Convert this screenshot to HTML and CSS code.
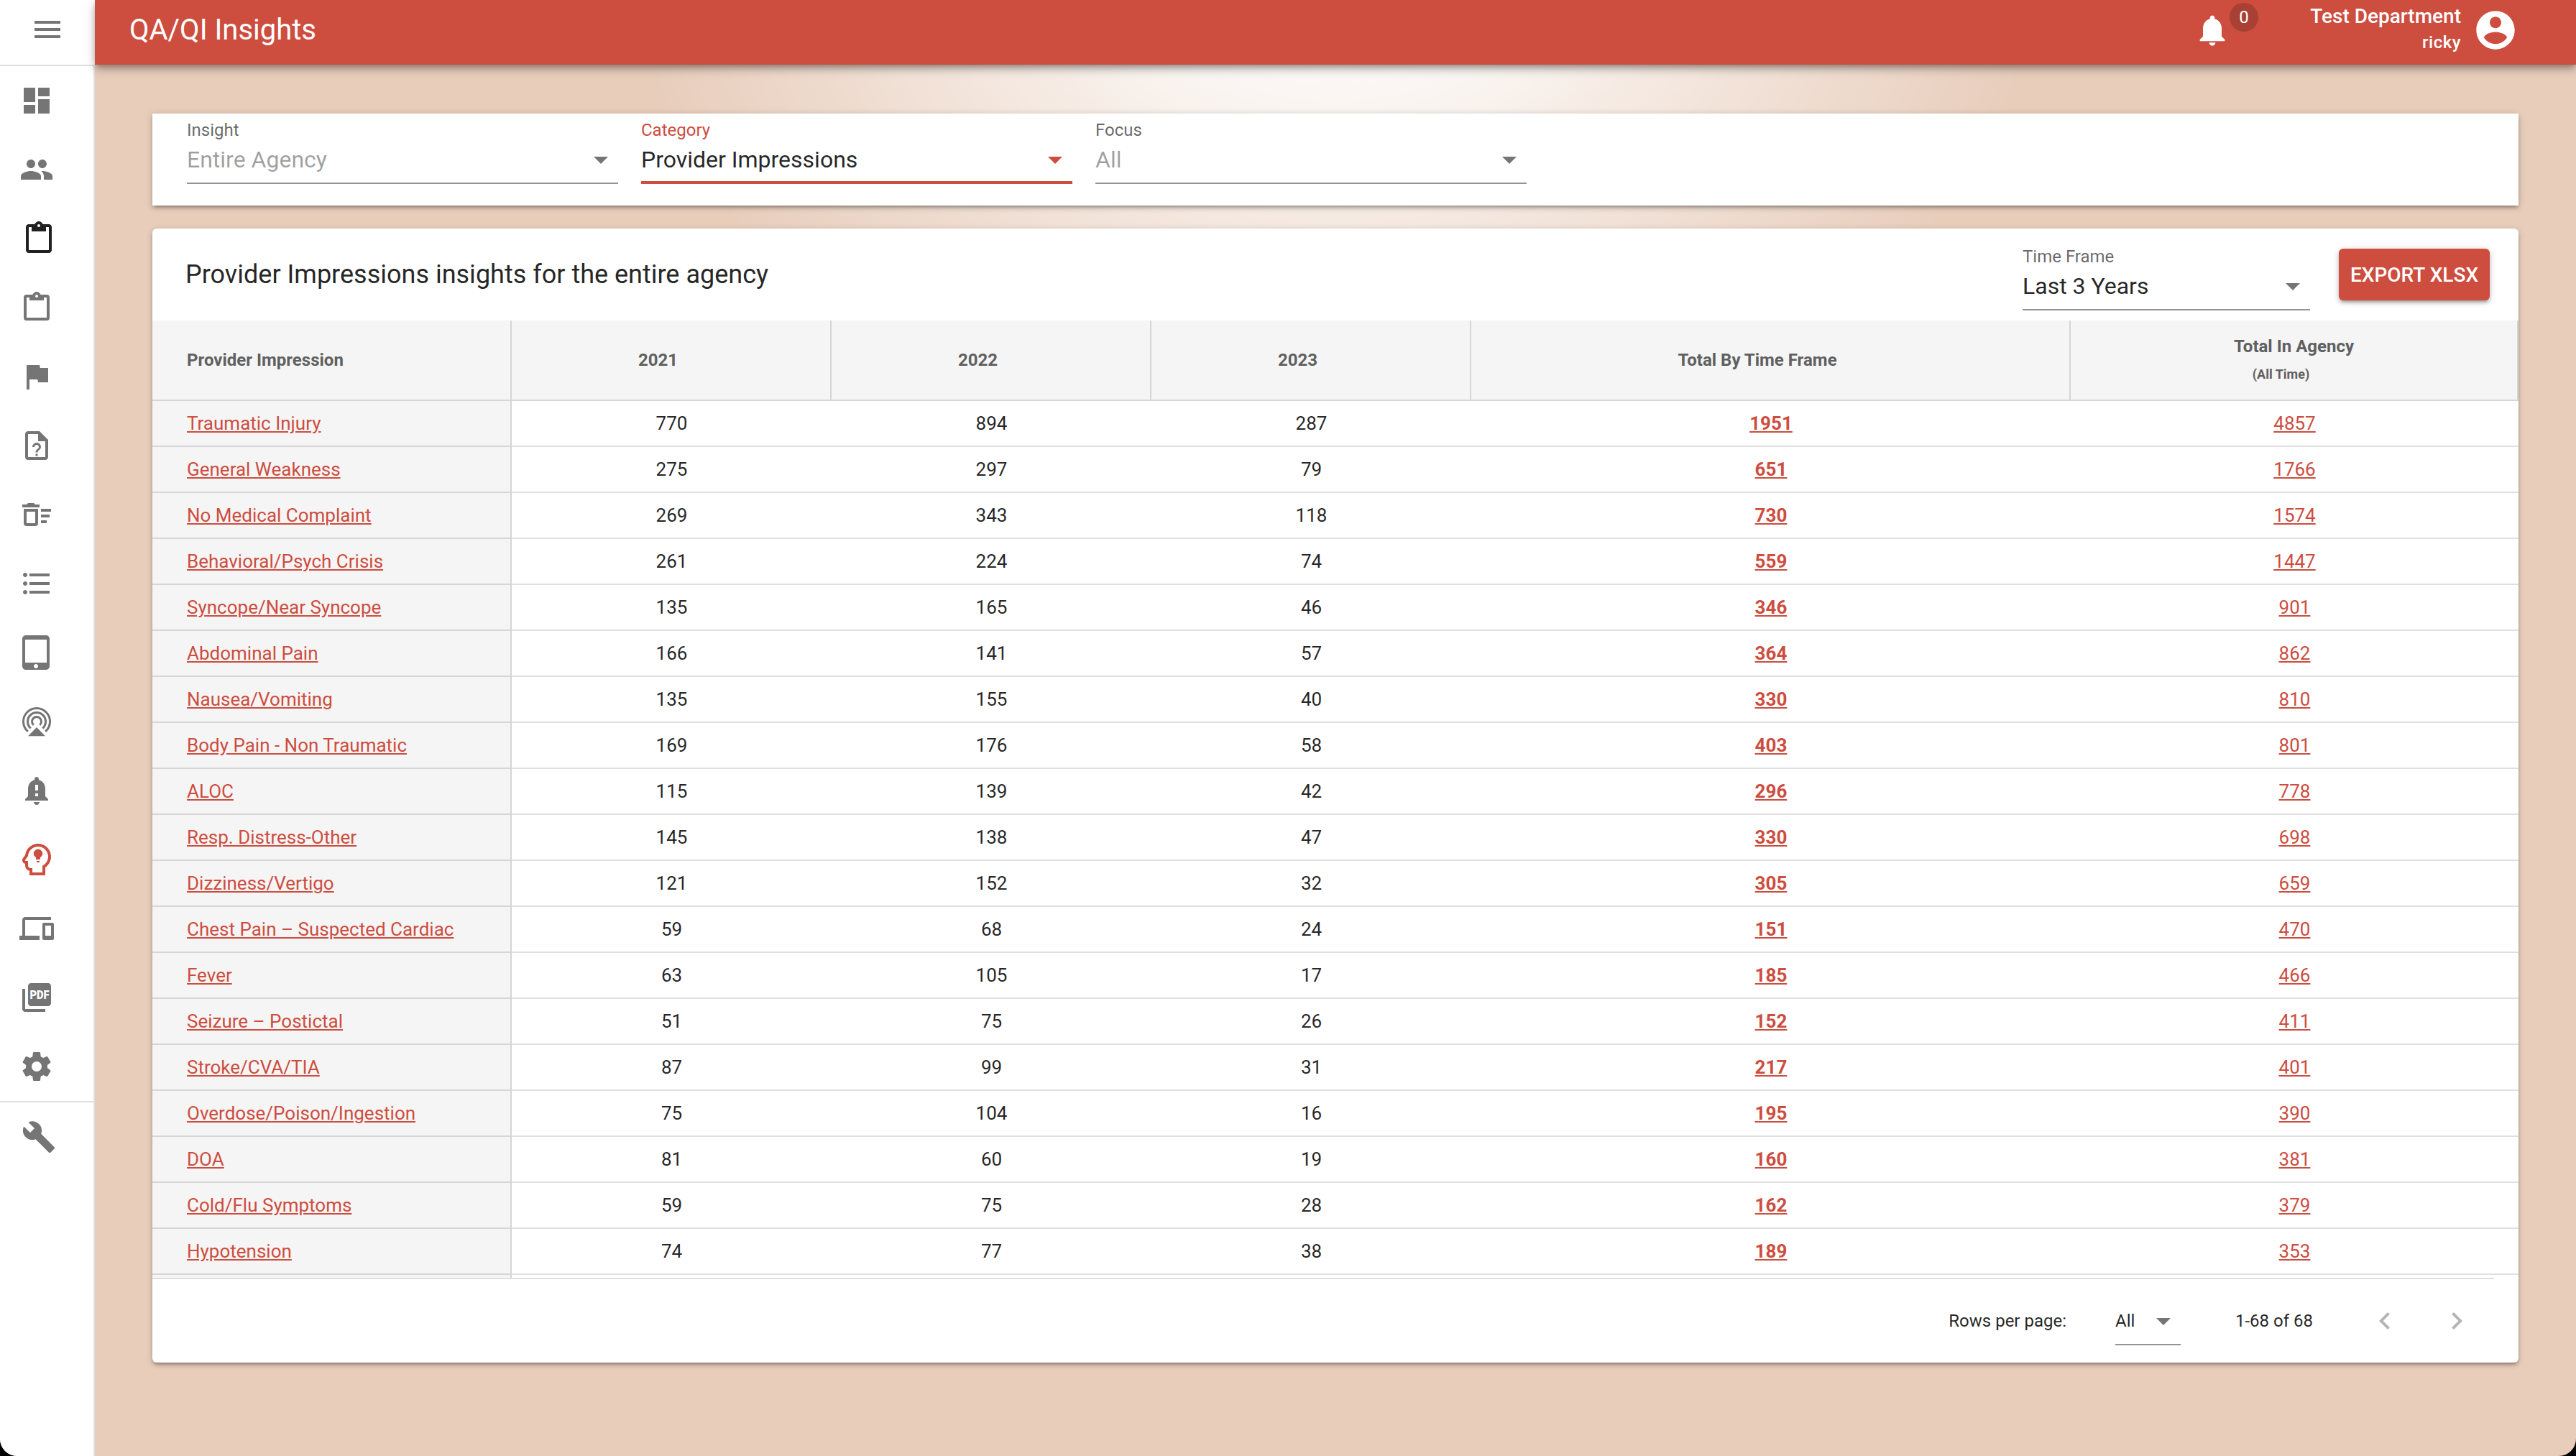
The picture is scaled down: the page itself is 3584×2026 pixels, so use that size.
FILE: index.html
```html
<!DOCTYPE html>
<html lang="en">
  <head>
    <meta charset="UTF-8" />
    <meta name="viewport" content="width=device-width, initial-scale=1.0" />
    <title>QA/QI Insights</title>
    <link rel="stylesheet" href="styles.css">
  </head>
  <body>
    <div class="app">
      <aside class="sidebar">
        <button class="menu">
          <svg class="icon" viewBox="0 0 24 24"><path d="M3 18h18v-2H3v2zm0-5h18v-2H3v2zm0-7v2h18V6H3z"/></svg>
        </button>
        <nav class="nav">
          <a class="nav-item"><svg class="icon" viewBox="0 0 24 24"><path d="M3 13h8V3H3v10zm0 8h8v-6H3v6zm10 0h8V11h-8v10zm0-18v6h8V3h-8z"/></svg></a>
          <a class="nav-item"><svg class="icon" viewBox="0 0 24 24"><path d="M16 11c1.66 0 2.99-1.34 2.99-3S17.66 5 16 5s-3 1.34-3 3 1.34 3 3 3zm-8 0c1.66 0 2.99-1.34 2.99-3S9.66 5 8 5 5 6.34 5 8s1.34 3 3 3zm0 2c-2.33 0-7 1.17-7 3.5V19h14v-2.5c0-2.33-4.67-3.5-7-3.5zm8 0c-.29 0-.62.02-.97.05 1.16.84 1.97 1.97 1.97 3.45V19h6v-2.5c0-2.33-4.67-3.5-7-3.5z"/></svg></a>
          <a class="nav-item dark shifted"><svg class="icon" viewBox="0 0 24 24"><path d="M19 2h-4.18C14.4.84 13.3 0 12 0c-1.3 0-2.4.84-2.82 2H5c-1.1 0-2 .9-2 2v16c0 1.1.9 2 2 2h14c1.1 0 2-.9 2-2V4c0-1.1-.9-2-2-2zm-7 0c.55 0 1 .45 1 1s-.45 1-1 1-1-.45-1-1 .45-1 1-1zm7 18H5V4h2v3h10V4h2v16z"/></svg></a>
          <a class="nav-item"><svg class="icon" viewBox="0 0 24 24"><path d="M19,3H14.82C14.4,1.84 13.3,1 12,1C10.7,1 9.6,1.84 9.18,3H5A2,2 0 0,0 3,5V19A2,2 0 0,0 5,21H19A2,2 0 0,0 21,19V5A2,2 0 0,0 19,3M12,3A1,1 0 0,1 13,4A1,1 0 0,1 12,5A1,1 0 0,1 11,4A1,1 0 0,1 12,3M7,7H17V5H19V19H5V5H7V7Z"/></svg></a>
          <a class="nav-item"><svg class="icon" viewBox="0 0 24 24"><path d="M14.4 6L14 4H5v17h2v-7h5.6l.4 2h7V6z"/></svg></a>
          <a class="nav-item"><svg class="icon" viewBox="0 0 24 24"><path d="M14 2H6C4.89 2 4 2.9 4 4V20C4 21.11 4.89 22 6 22H18C19.11 22 20 21.11 20 20V8L14 2M18 20H6V4H13V9H18V20M15 13C15 14.89 12.75 15.07 12.75 16.76H11.25C11.25 14.32 13.5 14.5 13.5 13C13.5 12.18 12.83 11.5 12 11.5S10.5 12.18 10.5 13H9C9 11.35 10.34 10 12 10S15 11.35 15 13M12.75 17.75V19.25H11.25V17.75H12.75Z"/></svg></a>
          <a class="nav-item"><svg class="icon" viewBox="0 0 24 24"><path d="M15,16H19V18H15V16M15,8H22V10H15V8M15,12H21V14H15V12M11,10V18H5V10H11M13,8H3V18A2,2 0 0,0 5,20H11A2,2 0 0,0 13,18V8M14,5H11L10,4H6L5,5H2V7H14V5Z"/></svg></a>
          <a class="nav-item"><svg class="icon" viewBox="0 0 24 24"><path d="M4 10.5c-.83 0-1.5.67-1.5 1.5s.67 1.5 1.5 1.5 1.5-.67 1.5-1.5-.67-1.5-1.5-1.5zm0-6c-.83 0-1.5.67-1.5 1.5S3.17 7.5 4 7.5 5.5 6.83 5.5 6 4.83 4.5 4 4.5zm0 12c-.83 0-1.5.68-1.5 1.5s.68 1.5 1.5 1.5 1.5-.68 1.5-1.5-.67-1.5-1.5-1.5zM7 19h14v-2H7v2zm0-6h14v-2H7v2zm0-8v2h14V5H7z"/></svg></a>
          <a class="nav-item"><svg class="icon" viewBox="0 0 24 24"><path d="M18.5 0h-14C3.12 0 2 1.12 2 2.5v19C2 22.88 3.12 24 4.5 24h14c1.38 0 2.5-1.12 2.5-2.5v-19C21 1.12 19.88 0 18.5 0zm-7 23c-.83 0-1.5-.67-1.5-1.5s.67-1.5 1.5-1.5 1.5.67 1.5 1.5-.67 1.5-1.5 1.5zm7.5-4H4V3h15v16z"/></svg></a>
          <a class="nav-item">
            <svg class="icon" viewBox="0 0 24 24">
              <g fill="none" stroke="currentColor" stroke-width="1.5">
                <path d="M5.93 18.98A9.25 9.25 0 1 1 18.07 18.98"/>
                <path d="M7.9 16.72A6.25 6.25 0 1 1 16.1 16.72"/>
                <path d="M9.87 14.45A3.25 3.25 0 1 1 14.13 14.45"/>
              </g>
              <path d="M12 16l6 6.1H6z"/>
            </svg>
          </a>
          <a class="nav-item"><svg class="icon" viewBox="0 0 24 24"><path d="M18 16v-5c0-3.07-1.64-5.64-4.5-6.32V4c0-.83-.67-1.5-1.5-1.5s-1.5.67-1.5 1.5v.68C7.63 5.36 6 7.92 6 11v5l-2 2v1h16v-1l-2-2zm-5 0h-2v-2h2v2zm0-4h-2V8h2v4zm-1 10c1.1 0 2-.9 2-2h-4c0 1.1.89 2 2 2z"/></svg></a>
          <a class="nav-item active"><svg class="icon" viewBox="0 0 24 24"><path d="M13,3C16.88,3 20,6.14 20,10C20,12.8 18.37,15.19 16,16.31V21H9V18H8A2,2 0 0,1 6,16V13H4.5C4.08,13 3.84,12.5 4.08,12.19L6,9.66C6.19,5.95 9.23,3 13,3M13,1C8.41,1 4.61,4.42 4.06,8.9L2.5,11C1.92,11.72 1.82,12.72 2.24,13.59C2.6,14.31 3.24,14.8 4,14.95V16C4,17.86 5.28,19.43 7,19.87V23H18V17.5C20.5,15.83 22,13.06 22,10C22,5.03 17.97,1 13,1M14,14H12V13H14V14M13,4.8A3.1,3.1 0 0,0 9.9,7.9C9.9,9.05 10.5,10 11.5,10.5V11.5C11.5,11.78 11.72,12 12,12H14C14.28,12 14.5,11.78 14.5,11.5V10.5C15.5,10 16.1,9.05 16.1,7.9A3.1,3.1 0 0,0 13,4.8Z"/></svg></a>
          <a class="nav-item"><svg class="icon" viewBox="0 0 24 24"><path d="M4 6h18V4H4c-1.1 0-2 .9-2 2v11H0v3h14v-3H4V6zm19 2h-6c-.55 0-1 .45-1 1v10c0 .55.45 1 1 1h6c.55 0 1-.45 1-1V9c0-.55-.45-1-1-1zm-1 9h-4v-7h4v7z"/></svg></a>
          <a class="nav-item">
            <svg class="icon" viewBox="0 0 24 24">
              <path d="M20 2H8c-1.1 0-2 .9-2 2v12c0 1.1.9 2 2 2h12c1.1 0 2-.9 2-2V4c0-1.1-.9-2-2-2zM4 6H2v14c0 1.1.9 2 2 2h14v-2H4V6z"/>
              <text class="pdf" x="7.2" y="13" textLength="13.6" lengthAdjust="spacingAndGlyphs">PDF</text>
            </svg>
          </a>
          <a class="nav-item"><svg class="icon" viewBox="0 0 24 24"><path d="M12,15.5A3.5,3.5 0 0,1 8.5,12A3.5,3.5 0 0,1 12,8.5A3.5,3.5 0 0,1 15.5,12A3.5,3.5 0 0,1 12,15.5M19.43,12.97C19.47,12.65 19.5,12.33 19.5,12C19.5,11.67 19.47,11.34 19.43,11L21.54,9.37C21.73,9.22 21.78,8.95 21.66,8.73L19.66,5.27C19.54,5.05 19.27,4.96 19.05,5.05L16.56,6.05C16.04,5.66 15.5,5.32 14.87,5.07L14.5,2.42C14.46,2.18 14.25,2 14,2H10C9.75,2 9.54,2.18 9.5,2.42L9.13,5.07C8.5,5.32 7.96,5.66 7.44,6.05L4.95,5.05C4.73,4.96 4.46,5.05 4.34,5.27L2.34,8.73C2.21,8.95 2.27,9.22 2.46,9.37L4.57,11C4.53,11.34 4.5,11.67 4.5,12C4.5,12.33 4.53,12.65 4.57,12.97L2.46,14.63C2.27,14.78 2.21,15.05 2.34,15.27L4.34,18.73C4.46,18.95 4.73,19.03 4.95,18.95L7.44,17.94C7.96,18.34 8.5,18.68 9.13,18.93L9.5,21.58C9.54,21.82 9.75,22 10,22H14C14.25,22 14.46,21.82 14.5,21.58L14.87,18.93C15.5,18.67 16.04,18.34 16.56,17.94L19.05,18.95C19.27,19.03 19.54,18.95 19.66,18.73L21.66,15.27C21.78,15.05 21.73,14.78 21.54,14.63L19.43,12.97Z"/></svg></a>
        </nav>
        <a class="nav-item tools shifted"><svg class="icon" viewBox="0 0 24 24"><path d="M22.7 19l-9.1-9.1c.9-2.3.4-5-1.5-6.9-2-2-5-2.4-7.4-1.3L9 6 6 9 1.6 4.7C.4 7.1.9 10.1 2.9 12.1c1.9 1.9 4.6 2.4 6.9 1.5l9.1 9.1c.4.4 1 .4 1.4 0l2.3-2.3c.5-.4.5-1.1.1-1.4z"/></svg></a>
      </aside>

      <div class="page">
        <header class="header">
          <h1>QA/QI Insights</h1>
          <div class="bell">
            <svg viewBox="0 0 24 24"><path d="M12 22c1.1 0 2-.9 2-2h-4c0 1.1.89 2 2 2zm6-6v-5c0-3.07-1.64-5.64-4.5-6.32V4c0-.83-.67-1.5-1.5-1.5s-1.5.67-1.5 1.5v.68C7.63 5.36 6 7.92 6 11v5l-2 2v1h16v-1l-2-2z"/></svg>
            <span class="badge">0</span>
          </div>
          <div class="user">
            <div class="department">Test Department</div>
            <div class="name">ricky</div>
          </div>
          <svg class="avatar" viewBox="0 0 24 24"><path d="M12 2C6.48 2 2 6.48 2 12s4.48 10 10 10 10-4.48 10-10S17.52 2 12 2zm0 3c1.66 0 3 1.34 3 3s-1.34 3-3 3-3-1.34-3-3 1.34-3 3-3zm0 14.2c-2.5 0-4.71-1.28-6-3.22.03-1.99 4-3.08 6-3.08 1.99 0 5.97 1.09 6 3.08-1.29 1.94-3.5 3.22-6 3.22z"/></svg>
        </header>

        <main class="content">
          <section class="card filters">
            <div class="field disabled">
              <label>Insight</label>
              <div class="value">Entire Agency<svg class="icon arrow" viewBox="0 0 24 24"><path d="M7 10l5 5 5-5z"/></svg></div>
            </div>
            <div class="field focused">
              <label>Category</label>
              <div class="value">Provider Impressions<svg class="icon arrow" viewBox="0 0 24 24"><path d="M7 10l5 5 5-5z"/></svg></div>
            </div>
            <div class="field disabled">
              <label>Focus</label>
              <div class="value">All<svg class="icon arrow" viewBox="0 0 24 24"><path d="M7 10l5 5 5-5z"/></svg></div>
            </div>
          </section>

          <section class="card report">
            <div class="report-top">
              <h2>Provider Impressions insights for the entire agency</h2>
              <div class="field time-frame">
                <label>Time Frame</label>
                <div class="value">Last 3 Years<svg class="icon arrow" viewBox="0 0 24 24"><path d="M7 10l5 5 5-5z"/></svg></div>
              </div>
              <button class="export">EXPORT XLSX</button>
            </div>

            <div class="table-wrap">
              <table>
                <colgroup>
                  <col class="col-name">
                  <col class="col-year">
                  <col class="col-year">
                  <col class="col-year">
                  <col class="col-frame">
                  <col>
                </colgroup>
                <thead>
                  <tr>
                    <th>Provider Impression</th>
                    <th>2021<span class="sort"></span></th>
                    <th>2022<span class="sort"></span></th>
                    <th>2023<span class="sort"></span></th>
                    <th>Total By Time Frame<span class="sort"></span></th>
                    <th>Total In Agency<br><small>(All Time)</small><span class="sort"></span></th>
                  </tr>
                </thead>
                <tbody class="rows"></tbody>
              </table>
            </div>

            <footer class="pagination">
              <span>Rows per page:</span>
              <div class="page-size">All<svg class="icon arrow" viewBox="0 0 24 24"><path d="M7 10l5 5 5-5z"/></svg></div>
              <span class="count">1-68 of 68</span>
              <svg class="icon prev" viewBox="0 0 24 24"><path d="M15.41 7.41L14 6l-6 6 6 6 1.41-1.41L10.83 12z"/></svg>
              <svg class="icon next" viewBox="0 0 24 24"><path d="M10 6L8.59 7.41 13.17 12l-4.58 4.59L10 18l6-6z"/></svg>
            </footer>
          </section>
        </main>
      </div>
    </div>

    <script type="text/javascript">
      // name, 2021, 2022, 2023, total by time frame, total in agency
      const impressions = [
        ["Traumatic Injury", 770, 894, 287, 1951, 4857],
        ["General Weakness", 275, 297, 79, 651, 1766],
        ["No Medical Complaint", 269, 343, 118, 730, 1574],
        ["Behavioral/Psych Crisis", 261, 224, 74, 559, 1447],
        ["Syncope/Near Syncope", 135, 165, 46, 346, 901],
        ["Abdominal Pain", 166, 141, 57, 364, 862],
        ["Nausea/Vomiting", 135, 155, 40, 330, 810],
        ["Body Pain - Non Traumatic", 169, 176, 58, 403, 801],
        ["ALOC", 115, 139, 42, 296, 778],
        ["Resp. Distress-Other", 145, 138, 47, 330, 698],
        ["Dizziness/Vertigo", 121, 152, 32, 305, 659],
        ["Chest Pain – Suspected Cardiac", 59, 68, 24, 151, 470],
        ["Fever", 63, 105, 17, 185, 466],
        ["Seizure – Postictal", 51, 75, 26, 152, 411],
        ["Stroke/CVA/TIA", 87, 99, 31, 217, 401],
        ["Overdose/Poison/Ingestion", 75, 104, 16, 195, 390],
        ["DOA", 81, 60, 19, 160, 381],
        ["Cold/Flu Symptoms", 59, 75, 28, 162, 379],
        ["Hypotension", 74, 77, 38, 189, 353],
      ];

      const tbody = document.querySelector(".rows");

      impressions.forEach(([name, y1, y2, y3, frame, agency]) => {
        const tr = document.createElement("tr");
        tr.innerHTML = `
          <td><a>${name}</a></td>
          <td>${y1}</td>
          <td>${y2}</td>
          <td>${y3}</td>
          <td><a class="bold">${frame}</a></td>
          <td><a>${agency}</a></td>`;
        tbody.appendChild(tr);
      });

      // next row, cut off by the scroll area
      const next = document.createElement("tr");
      next.innerHTML = "<td></td>".repeat(6);
      tbody.appendChild(next);
    </script>
  </body>
</html>
```
FILE: styles.css
```css
* {
  box-sizing: border-box;
}

body {
  margin: 0;
  background: #000;
  font-family: Roboto, sans-serif;
  color: rgba(0, 0, 0, 0.87);
}

h1,
h2 {
  margin: 0;
  font-weight: 400;
}

button {
  border: 0;
  padding: 0;
  font-family: inherit;
}

.app {
  display: flex;
  height: 2026px;
  overflow: hidden;
  border-radius: 0 0 24px 24px;
  background: #e8cdbb;
}

.icon {
  display: block;
  flex: none;
  width: 48px;
  height: 48px;
  fill: currentColor;
}

/* sidebar */
.sidebar {
  width: 132px;
  flex: none;
  background: #fff;
  color: #757575;
}

.menu {
  display: flex;
  align-items: center;
  width: 132px;
  height: 92px;
  padding: 0 0 8px 42px;
  border-bottom: 2px solid #e0e0e0;
  background: #fff;
  color: #757575;
}

.nav,
.tools {
  border-right: 2px solid #e0e0e0;
}

.nav-item {
  display: flex;
  align-items: center;
  height: 96px;
  padding-left: 27px;
}

.nav-item.shifted {
  padding-left: 30px;
}

.nav-item.dark {
  color: #212121;
}

.nav-item.active {
  color: #cd4d3f;
}

.nav-item.tools {
  height: 494px;
  padding-top: 24px;
  align-items: flex-start;
  border-top: 2px solid #e0e0e0;
}

.pdf {
  fill: #fff;
  font-size: 8.4px;
  font-weight: 900;
}

/* header */
.page {
  flex: 1;
  background: radial-gradient(980px 730px at 50% -65px, #fff, rgba(255, 255, 255, 0.8) 30%, rgba(255, 255, 255, 0));
}

.header {
  position: relative;
  display: flex;
  height: 90px;
  padding: 0 80px 0 48px;
  background: #cd4d3f;
  color: #fff;
  box-shadow: 0 4px 8px -2px rgba(0, 0, 0, 0.3), 0 8px 10px rgba(0, 0, 0, 0.14), 0 2px 20px rgba(0, 0, 0, 0.12);
}

.header h1 {
  flex: 1;
  font-size: 40px;
  line-height: 83px;
}

.bell {
  position: relative;
  width: 52px;
  padding-top: 16px;
}

.bell svg {
  display: block;
  width: 52px;
  height: 52px;
  fill: #fff;
}

.badge {
  position: absolute;
  top: 4px;
  left: 50px;
  width: 40px;
  border-radius: 50%;
  background: #a84034;
  font-size: 24px;
  line-height: 40px;
  text-align: center;
}

.user {
  width: 320px;
  padding-top: 5px;
  font-weight: 500;
  text-align: right;
}

.department {
  font-size: 28px;
  line-height: 36px;
}

.name {
  font-size: 24px;
  line-height: 36px;
  letter-spacing: 0.5px;
}

.avatar {
  width: 64px;
  height: 64px;
  margin: 10px 0 0 16px;
  fill: #fff;
}

/* cards */
.content {
  padding: 68px 80px 0;
}

.card {
  background: #fff;
  box-shadow: 0 2px 10px rgba(0, 0, 0, 0.2), 0 4px 4px rgba(0, 0, 0, 0.14), 0 6px 2px -4px rgba(0, 0, 0, 0.12);
}

.filters {
  display: flex;
  gap: 32px;
  height: 128px;
  padding: 0 48px;
}

.field {
  width: 600px;
  height: 98px;
  border-bottom: 2px solid #949494;
}

.field label {
  display: block;
  font-size: 24px;
  line-height: 46px;
  color: rgba(0, 0, 0, 0.6);
}

.field .value {
  display: flex;
  align-items: center;
  justify-content: space-between;
  height: 36px;
  font-size: 32px;
  line-height: 36px;
}

.arrow {
  color: #757575;
}

.field.disabled .value {
  color: rgba(0, 0, 0, 0.38);
}

.field.focused {
  border-bottom: 4px solid #cd4d3f;
}

.field.focused label,
.field.focused .arrow {
  color: #cd4d3f;
}

.report {
  height: 1578px;
  margin-top: 32px;
  border-radius: 6px;
}

.report-top {
  display: flex;
  align-items: center;
  height: 128px;
  padding: 0 40px 0 46px;
}

.report-top h2 {
  flex: 1;
  font-size: 36px;
}

.field.time-frame {
  width: 400px;
  margin-top: 2px;
}

.export {
  width: 210px;
  height: 72px;
  margin-left: 40px;
  border-radius: 6px;
  background: #cd4d3f;
  color: #fff;
  font-size: 28px;
  font-weight: 500;
  box-shadow: 0 2px 10px rgba(0, 0, 0, 0.2), 0 4px 4px rgba(0, 0, 0, 0.14), 0 6px 2px -4px rgba(0, 0, 0, 0.12);
}

/* table */
.table-wrap {
  height: 1332px;
  overflow: hidden;
}

table {
  width: 100%;
  table-layout: fixed;
  border-spacing: 0;
}

.col-name {
  width: 500px;
}

.col-year {
  width: 445px;
}

.col-frame {
  width: 834px;
}

th {
  height: 112px;
  padding: 0;
  background: #f5f5f5;
  border-right: 2px solid #d6d6d6;
  border-bottom: 2px solid #d6d6d6;
  color: #606060;
  font-size: 24px;
  font-weight: 700;
  line-height: 37px;
}

th:last-child {
  padding-top: 1px;
}

th small {
  font-size: 18px;
}

.sort {
  display: inline-block;
  width: 36px;
}

td {
  height: 64px;
  padding: 0;
  border-bottom: 2px solid #e0e0e0;
  font-size: 26px;
  line-height: 62px;
  text-align: center;
}

th:first-child,
td:first-child {
  padding-left: 48px;
  text-align: left;
}

td:first-child {
  background: #f5f5f5;
  border-right: 2px solid #d6d6d6;
  border-bottom-color: #d6d6d6;
}

td a {
  color: #cd4d3f;
  text-decoration: underline;
}

td a.bold {
  font-weight: 700;
}

/* footer */
.pagination {
  display: flex;
  align-items: center;
  justify-content: flex-end;
  height: 118px;
  margin-right: 34px;
  padding-right: 28px;
  border-top: 2px solid #e0e0e0;
  font-size: 24px;
}

.page-size {
  display: flex;
  align-items: center;
  justify-content: space-between;
  width: 91px;
  height: 68px;
  margin: 0 76px 0 68px;
  border-top: 2px solid transparent;
  border-bottom: 2px solid #949494;
}

.prev,
.next {
  color: #b5b5b5;
}

.prev {
  margin: 0 52px 0 76px;
}
```
